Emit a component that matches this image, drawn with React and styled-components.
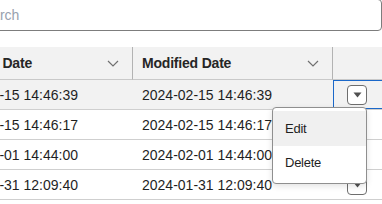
import React from 'react';
import styled, { createGlobalStyle } from 'styled-components';

const ROWS = [
  { created: '2024-02-15 14:46:39', modified: '2024-02-15 14:46:39' },
  { created: '2024-02-15 14:46:17', modified: '2024-02-15 14:46:17' },
  { created: '2024-02-01 14:44:00', modified: '2024-02-01 14:44:00' },
  { created: '2024-01-31 12:09:40', modified: '2024-01-31 12:09:40' },
];

const GlobalStyle = createGlobalStyle`
  html, body {
    margin: 0;
    padding: 0;
    background: #ffffff;
    overflow: hidden;
  }
  body {
    font-family: "Liberation Sans", Arial, sans-serif;
    color: #1f1f1f;
  }
`;

const Chevron = () => (
  <svg width="12" height="7" viewBox="0 0 12 7">
    <path d="M1 1 L6 6 L11 1" fill="none" stroke="#707070" strokeWidth="1.2" />
  </svg>
);

const Caret = () => (
  <svg width="9" height="6" viewBox="0 0 9 6">
    <path d="M0.5 0.5 L8.5 0.5 L4.5 5.5 Z" fill="#505050" />
  </svg>
);

const App = () => {
  return (
    <>
      <GlobalStyle />
      <Page>
        <SearchInput placeholder="Search" />
        <Table>
          <colgroup>
            <col style={{ width: 194 }} />
            <col style={{ width: 200 }} />
            <col style={{ width: 51 }} />
          </colgroup>
          <thead>
            <tr>
              <HeadCell $divider>
                <HeadInner>
                  <span>Created Date</span>
                  <Chevron />
                </HeadInner>
              </HeadCell>
              <HeadCell $divider>
                <HeadInner>
                  <span>Modified Date</span>
                  <Chevron />
                </HeadInner>
              </HeadCell>
              <HeadCell />
            </tr>
          </thead>
          <tbody>
            {ROWS.map((row, i) => (
              <Row key={i} $active={i === 0}>
                <Cell>{row.created}</Cell>
                <Cell>{row.modified}</Cell>
                <ActionCell $focused={i === 0}>
                  <ButtonWrap>
                    <MenuButton>
                      <Caret />
                    </MenuButton>
                    {i === 0 && (
                      <Menu>
                        <MenuItem $highlight>Edit</MenuItem>
                        <MenuItem>Delete</MenuItem>
                      </Menu>
                    )}
                  </ButtonWrap>
                </ActionCell>
              </Row>
            ))}
          </tbody>
        </Table>
      </Page>
    </>
  );
};

const Page = styled.div`
  margin-left: -61px;
  margin-top: -1px;
  width: 445px;
  display: flex;
  flex-direction: column;
  gap: 16px;
`;

const SearchInput = styled.input`
  box-sizing: border-box;
  width: 443px;
  height: 32px;
  padding: 0 10px 0 35px;
  border: 1px solid #7d7d7d;
  border-radius: 4px;
  font-family: "Liberation Sans", Arial, sans-serif;
  font-size: 14px;
  color: #1f1f1f;
  outline: none;

  &::placeholder {
    color: #98a1ae;
  }
`;

const Table = styled.table`
  width: 445px;
  table-layout: fixed;
  border-collapse: separate;
  border-spacing: 0;
  font-size: 14px;
`;

const HeadCell = styled.th`
  height: 32px;
  padding: 0;
  background: #f2f2f2;
  border-bottom: 1px solid #c9c9c9;
  border-right: ${({ $divider }) => ($divider ? '1px solid #b3b3b3' : 'none')};
  text-align: left;
  font-size: 14px;
  font-weight: 700;
  letter-spacing: -0.2px;
  color: #262626;
`;

const HeadInner = styled.div`
  display: flex;
  align-items: center;
  justify-content: space-between;
  padding: 0 13px 0 9px;
`;

const Row = styled.tr`
  background: ${({ $active }) => ($active ? '#f2f2f2' : '#ffffff')};
`;

const Cell = styled.td`
  height: 29px;
  padding: 0 0 0 9px;
  border-bottom: 1px solid #cfcfcf;
  white-space: nowrap;
  overflow: hidden;
  color: #1f1f1f;
`;

const ActionCell = styled.td`
  height: 29px;
  padding: 0 0 0 14px;
  border-bottom: 1px solid #cfcfcf;
  box-shadow: ${({ $focused }) => ($focused ? 'inset 0 0 0 1px #1b68c9' : 'none')};
`;

const ButtonWrap = styled.div`
  position: relative;
  width: 20px;
  height: 20px;
`;

const MenuButton = styled.button`
  box-sizing: border-box;
  width: 20px;
  height: 20px;
  padding: 0;
  display: flex;
  align-items: center;
  justify-content: center;
  background: #ffffff;
  border: 1px solid #6e6e6e;
  border-radius: 4px;
`;

const Menu = styled.div`
  position: absolute;
  top: 22px;
  right: 0;
  z-index: 10;
  box-sizing: border-box;
  width: 95px;
  padding: 3px 0;
  background: #ffffff;
  border: 1px solid #8f8f8f;
  border-radius: 4px;
  box-shadow: 0 2px 6px rgba(0, 0, 0, 0.12);
`;

const MenuItem = styled.div`
  height: ${({ $highlight }) => ($highlight ? '35px' : '34px')};
  display: flex;
  align-items: center;
  padding-left: 12px;
  background: ${({ $highlight }) => ($highlight ? '#f0f0f0' : 'transparent')};
  font-size: 13px;
  letter-spacing: -0.25px;
  color: #1f1f1f;
`;

export default App;
